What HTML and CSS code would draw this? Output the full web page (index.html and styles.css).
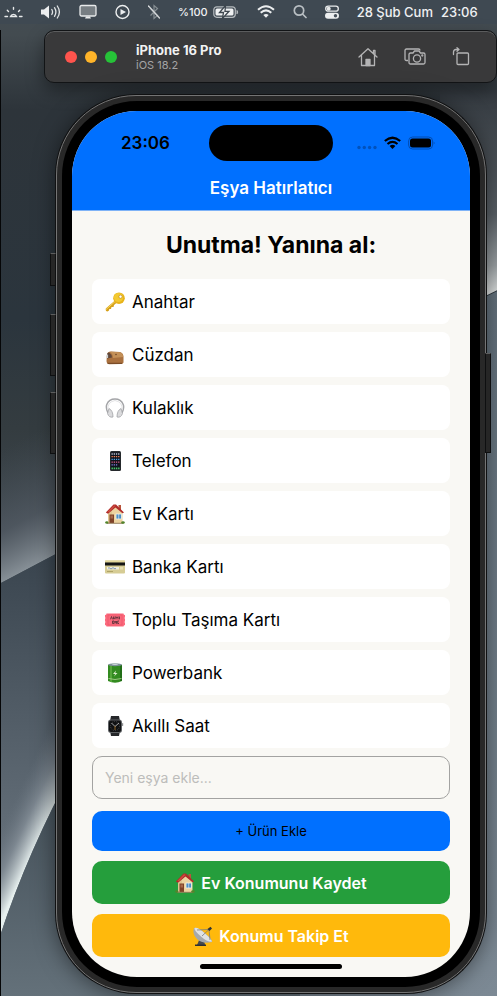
FILE: index.html
```html
<!DOCTYPE html>
<html lang="tr">
<head>
<meta charset="utf-8">
<meta name="viewport" content="width=device-width, initial-scale=1">
<title>Eşya Hatırlatıcı</title>
<link rel="stylesheet" href="styles.css">
</head>
<body>
<svg class="wallpaper" viewBox="0 0 497 996" preserveAspectRatio="none" aria-hidden="true">
  <defs>
    <linearGradient id="base" x1="0" y1="0" x2="0" y2="1">
      <stop offset="0" stop-color="#434c53"/><stop offset=".035" stop-color="#434b50"/><stop offset=".11" stop-color="#2d343a"/>
      <stop offset=".32" stop-color="#2b353d"/><stop offset=".43" stop-color="#343c40"/><stop offset=".6" stop-color="#46505a"/>
    </linearGradient>
    <linearGradient id="glowA" gradientUnits="userSpaceOnUse" x1="0" y1="450" x2="68" y2="578">
      <stop offset="0" stop-color="#454d54" stop-opacity="0"/><stop offset=".5" stop-color="#545c65" stop-opacity=".7"/><stop offset=".8" stop-color="#858e95"/><stop offset=".93" stop-color="#c0c8ca"/><stop offset="1" stop-color="#eef3f2"/>
    </linearGradient>
    <linearGradient id="mid" gradientUnits="userSpaceOnUse" x1="0" y1="560" x2="0" y2="860">
      <stop offset="0" stop-color="#3b4650"/><stop offset=".6" stop-color="#55606a"/><stop offset="1" stop-color="#66717b"/>
    </linearGradient>
    <linearGradient id="glowB" gradientUnits="userSpaceOnUse" x1="-8" y1="846" x2="28" y2="863">
      <stop offset="0" stop-color="#66717b" stop-opacity="0"/><stop offset=".5" stop-color="#87919a" stop-opacity=".7"/><stop offset="1" stop-color="#e6efee"/>
    </linearGradient>
    <linearGradient id="low" gradientUnits="userSpaceOnUse" x1="0" y1="800" x2="0" y2="996">
      <stop offset="0" stop-color="#46525b"/><stop offset="1" stop-color="#64717a"/>
    </linearGradient>
    <linearGradient id="rightA" gradientUnits="userSpaceOnUse" x1="0" y1="90" x2="0" y2="296">
      <stop offset="0" stop-color="#343a40"/><stop offset=".6" stop-color="#596066"/><stop offset=".85" stop-color="#9ba1a4"/><stop offset="1" stop-color="#e4e7e6"/>
    </linearGradient>
    <linearGradient id="rightB" gradientUnits="userSpaceOnUse" x1="0" y1="290" x2="0" y2="996">
      <stop offset="0" stop-color="#63717c"/><stop offset="1" stop-color="#7c8994"/>
    </linearGradient>
  </defs>
  <rect width="497" height="996" fill="url(#base)"/>
  <path d="M0 400H70V546L0 583Z" fill="url(#glowA)"/>
  <path d="M0 583L70 546V996H0Z" fill="url(#mid)"/>
  <path d="M0 650H75V764Q28 850 0 935Z" fill="url(#glowB)"/>
  <path d="M0 935Q28 850 75 764H300V996H0Z" fill="url(#low)"/>
  <path d="M440 90H497V290L440 318Z" fill="url(#rightA)"/>
  <path d="M300 386L497 291V996H300Z" fill="url(#rightB)"/>
  <path d="M0 30H1V996H0Z" fill="#050607"/>
</svg>

<header class="menubar">
  <svg width="19" height="22" viewBox="0 0 19 22" stroke="#e8eaeb" stroke-width="1.4" stroke-linecap="round" fill="none"><path d="M1 15.500H3.500M15.500 15.500H18M6.500 15.500A3.200 3.200 0 0 1 12.500 15.500ZM4.500 10.500L3.300 9.300M9.500 8.300V6.500M14.500 10.500L15.700 9.300"/></svg>
  <svg width="20" height="22" viewBox="0 0 20 22"><path d="M0 8.500H3L8 4.500V17.500L3 13.500H0Z" fill="#eceeef"/><path d="M10.800 8.500Q12.300 11 10.800 13.500M13.500 6.700Q16.300 11 13.500 15.300M16.300 5Q20.500 11 16.300 17" stroke="#e2e5e6" stroke-width="1.300" fill="none" stroke-linecap="round"/></svg>
  <svg width="18" height="22" viewBox="0 0 18 22"><rect x="1" y="4.500" width="16" height="10.500" rx="1.500" fill="#777e83" stroke="#e8eaeb" stroke-width="1.300"/><path d="M7 15.500H11L12 17.500H6Z" fill="#e8eaeb"/></svg>
  <svg width="15" height="22" viewBox="0 0 15 22"><circle cx="7.500" cy="11" r="6.500" stroke="#eceeef" stroke-width="1.400" fill="none"/><path d="M5.500 8L11 11L5.500 14Z" fill="#eceeef"/></svg>
  <svg width="12" height="22" viewBox="0 0 12 22" fill="none"><path d="M2.500 7.500L9.500 14.500L6 17.500V4.500L9.500 7.500L2.500 14.500" stroke="#858d92" stroke-width="1.200"/><path d="M.5 5L11.500 17" stroke="#d5d8da" stroke-width="1.300" stroke-linecap="round"/></svg>
  <div class="charge"><span>%100</span>
    <svg width="26" height="22" viewBox="0 0 26 22"><rect x=".8" y="5.800" width="21.500" height="10.500" rx="3" fill="none" stroke="#b5babd" stroke-width="1.200"/><rect x="2.500" y="7.500" width="18" height="7" rx="1.500" fill="#eff1f2"/><path d="M24 9.500Q25.500 11 24 12.800Z" fill="#b5babd" stroke="#b5babd"/><path d="M12.500 4.500L6.500 11.500H10.500L9.500 17.500L16 10.300H12Z" fill="#eff1f2" stroke="#3d464e" stroke-width="1.300"/></svg>
  </div>
  <svg width="18" height="22" viewBox="0 0 18 22" fill="none" stroke="#eceeef" stroke-width="2"><path d="M1 8.700Q9 1.700 17 8.700M3.700 11.700Q9 7 14.300 11.700"/><path d="M6.300 14Q9 11.800 11.700 14L9 16.700Z" fill="#eceeef" stroke="none"/></svg>
  <svg width="14" height="22" viewBox="0 0 14 22" fill="none" stroke="#b9bfc3" stroke-width="1.700" stroke-linecap="round"><circle cx="6" cy="9.500" r="4.700"/><path d="M9.500 13L13 16.500"/></svg>
  <svg width="14" height="22" viewBox="0 0 14 22"><rect x=".7" y="5.200" width="12.600" height="5" rx="2.500" fill="none" stroke="#e8eaeb" stroke-width="1.300"/><circle cx="3.700" cy="7.700" r="2" fill="#e8eaeb"/><rect x="0" y="11.800" width="14" height="6" rx="3" fill="#eceeef"/><circle cx="10.500" cy="14.800" r="1.700" fill="#46505a"/></svg>
  <span class="clock"><span>28 Şub Cum</span><span>23:06</span></span>
</header>

<section class="simbar">
  <span class="dots"><button class="dot red" aria-label="Kapat"></button><button class="dot amber" aria-label="Küçült"></button><button class="dot green" aria-label="Büyüt"></button></span>
  <div class="device"><strong>iPhone 16 Pro</strong><span>iOS 18.2</span></div>
  <div class="tools">
    <button aria-label="Ana ekran"><svg width="20" height="20" viewBox="0 0 20 20" fill="none" stroke="#b4b4b5" stroke-width="1.300" stroke-linejoin="round" stroke-linecap="round"><path d="M1 10L10 1.800L19 10M3.500 8V18.500H16.500V8M15.500 6.500V3.500H17V8"/><path d="M8 18.500V12.500H12V18.500Z" fill="#b4b4b5"/></svg></button>
    <button aria-label="Ekran görüntüsü"><svg width="22" height="20" viewBox="0 0 22 20" fill="none" stroke="#b4b4b5" stroke-width="1.300" stroke-linejoin="round"><path d="M4 13.500H2.500Q1 13.500 1 12V3.500Q1 2 2.500 2H14.500Q16 2 16 3.500"/><path d="M6.500 6H9L10.500 4H15L16.500 6H19.500Q21 6 21 7.500V15.500Q21 17 19.500 17H6.500Q5 17 5 15.500V7.500Q5 6 6.500 6Z"/><circle cx="13" cy="11.500" r="3.600"/><circle cx="18.300" cy="8.500" r=".5"/></svg></button>
    <button aria-label="Döndür"><svg width="18" height="20" viewBox="0 0 18 20" fill="none" stroke="#b4b4b5" stroke-width="1.300" stroke-linejoin="round" stroke-linecap="round"><rect x="5" y="6" width="11.500" height="11.500" rx="1"/><path d="M1.500 7.500V5Q1.500 2.500 4 2.500H6.500M5 .7L7 2.500L5 4.300"/></svg></button>
  </div>
</section>

<main class="phone">
  <i class="key action"></i><i class="key up"></i><i class="key down"></i><i class="key power"></i>
  <div class="bezel">
    <div class="screen">
      <div class="top">
        <div class="status">
          <span class="time">23:06</span>
          <span class="island"></span>
          <span class="signals">
            <svg width="78" height="14" viewBox="0 0 78 14"><g fill="#0052bd"><circle cx="2" cy="11.500" r="1.700"/><circle cx="7.300" cy="11.500" r="1.700"/><circle cx="12.600" cy="11.500" r="1.700"/><circle cx="18" cy="11.500" r="1.700"/></g><g fill="none" stroke="#000" stroke-width="2.200"><path d="M27.800 5Q35.500 -1.500 43.200 5M30.500 8Q35.500 3.800 40.500 8"/><path d="M32.600 10Q35.500 7.700 38.400 10L35.500 13Z" fill="#000" stroke="none"/></g><rect x="51.600" y="1" width="24" height="12" rx="4" fill="none" stroke="#004db2" stroke-width="1"/><rect x="53" y="2.500" width="21" height="9" rx="2.500"/><path d="M76.700 5.500Q78.500 7 76.700 8.500Z" fill="#004db2"/></svg>
          </span>
        </div>
        <h1>Eşya Hatırlatıcı</h1>
      </div>
      <div class="content">
        <h2>Unutma! Yanına al:</h2>
        <ul class="items">
          <li><svg class="emoji" viewBox="0 0 20 20"><path d="M10.500 8L.8 16.500Q.3 19.500 2.500 19.500L4 18.500L4.300 17L6 17L6.500 15L8.500 15L9 13L12 10.500Z" fill="#d6a018"/><path d="M1 17.500L11 8.700" stroke="#f7d65c" fill="none"/><circle cx="14" cy="6.200" r="5.800" fill="#e8b31a"/><circle cx="13.500" cy="5.500" r="4.600" fill="#f3c931"/><circle cx="15.500" cy="4.700" r="1.600" fill="#fff" stroke="#b17d10" stroke-width=".6"/></svg>Anahtar</li>
          <li><svg class="emoji" viewBox="0 0 20 20"><path d="M2 10Q2 6.500 6 6.500L15 7Q18.500 8 18.500 12V17.500Q18 19 16 19L4.500 19.300Q1.500 19 1.500 16Z" fill="#a9703e"/><path d="M6 6.700L15 7.200Q18 8.500 18.300 12L8 13Q8 9 5 7Z" fill="#c39058"/><path d="M1.800 11Q2 7.500 4 7.500Q6.500 9 7 12.500L2 13.500Z" fill="#5f473b"/><path d="M2.500 9.500V13" stroke="#ccd2d5" stroke-width="1.200"/><path d="M2.500 18.300H17" stroke="#6f4424" stroke-width="1"/><circle cx="11" cy="9.500" r=".8" fill="#6f4424"/></svg>Cüzdan</li>
          <li><svg class="emoji" viewBox="0 0 20 20" fill="none"><path d="M3 15Q.5 10 1.800 6.500Q4 1 10 1Q16 1 18.200 6.500Q19.500 10 17 15" stroke="#a4a5a8" stroke-width="1.500"/><path d="M3 12Q2 4 10 2.500Q18 4 17 12" stroke="#e3e3e5" stroke-width="1"/><path d="M4 10.500Q8 12.500 8 19Q4 20 2.500 15.500Z" fill="#dadadc" stroke="#a2a3a7" stroke-width=".8"/><path d="M16 10.500Q12 12.500 12 19Q16 20 17.500 15.500Z" fill="#dadadc" stroke="#a2a3a7" stroke-width=".8"/></svg>Kulaklık</li>
          <li><svg class="emoji" viewBox="0 0 20 20"><rect x="5" y="0" width="11" height="20" rx="1.500" fill="#25292c"/><rect x="6" y="1.500" width="9" height="17" fill="#10131c"/><g><path d="M6.500 3H14.500" stroke="#b9c2d4" stroke-width="1.300" stroke-dasharray="1.300 .9"/><path d="M6.500 5.700H14.500" stroke="#ef8257" stroke-width="1.300" stroke-dasharray="1.300 .9"/><path d="M6.500 8.400H14.500" stroke="#45a0e8" stroke-width="1.300" stroke-dasharray="1.300 .9"/><path d="M6.500 11.100H14.500" stroke="#d75c88" stroke-width="1.300" stroke-dasharray="1.300 .9"/><path d="M6.500 13.800H12.300" stroke="#7f7fdd" stroke-width="1.300" stroke-dasharray="1.300 .9"/><path d="M6.500 17.300H14.500" stroke="#48c968" stroke-width="1.700" stroke-dasharray="1.400 .8"/></g></svg>Telefon</li>
          <li><svg class="emoji" viewBox="0 0 20 20"><use href="#house"/></svg>Ev Kartı</li>
          <li><svg class="emoji" viewBox="0 0 20 20"><rect x="0" y="3.500" width="20" height="13" rx="1" fill="#d6cc94"/><rect x="0" y="3.500" width="20" height="1.500" fill="#e3d79b"/><rect y="5.500" width="20" height="3" fill="#151515"/><rect x="2" y="10" width="12" height="2.500" fill="#efecdf"/><path d="M3 11.300Q4 10 5 11.300T7 11.300T9 11.300T11 11.300" stroke="#5477a0" stroke-width=".7" fill="none"/><path d="M2 14.500H8" stroke="#9d9054" stroke-width=".7"/><rect x="15" y="10" width="3" height="2.500" fill="#e7dfb1"/></svg>Banka Kartı</li>
          <li><svg class="emoji" viewBox="0 0 20 20"><path d="M1.500 3.500H18.500Q18.500 5 20 5V7L19.500 8L20 9V11L19.500 12L20 13V15Q18.500 15 18.500 16.500H1.500Q1.500 15 0 15V13L.5 12L0 11V9L.5 8L0 7V5Q1.500 5 1.500 3.500Z" fill="#fb697c"/><rect x="3" y="5" width="14" height="10" fill="none" stroke="#ea5469" stroke-width=".7"/><path d="M5.500 9.300L6.500 6.500L7.500 9.300M8.500 6.500V9L10 8.500V6.500M11 9.300V6.700L12 8L13 6.700V9.300M14.500 6.500V9.300M7.500 11V13.500H9V11ZM10 13.500V11L11.500 13.500V11M14 11H12.700V13.500H14" stroke="#60343d" stroke-width=".9" fill="none"/></svg>Toplu Taşıma Kartı</li>
          <li><svg class="emoji" viewBox="0 0 20 20"><path d="M3 2Q10 -.5 17 2V18Q10 21.500 3 18Z" fill="#338b20"/><path d="M6 2.500V19" stroke="#55a63a" stroke-width="2"/><path d="M16 2V18" stroke="#1d6414" stroke-width="1.500"/><ellipse cx="10" cy="1.800" rx="7" ry="1.500" fill="#7e9299"/><ellipse cx="10" cy="1.200" rx="3" ry=".8" fill="#ced8db"/><path d="M11 7.500L8 11H10.300L9 13.500L12.500 10H10.300Z" fill="#dfeecf"/><path d="M3.500 15.500Q10 17.500 16.500 15.500" stroke="#b7d69b" stroke-width=".8" fill="none"/></svg>Powerbank</li>
          <li><svg class="emoji" viewBox="0 0 20 20"><path d="M6 0H14L15 5H5ZM5 15H15L14 20H6Z" fill="#25272a"/><rect x="3" y="3.500" width="14" height="13.500" rx="3" fill="#5e6164"/><rect x="4" y="4.500" width="12" height="11.500" rx="2" fill="#101113"/><rect x="17" y="7" width="1.200" height="3" rx=".5" fill="#8f9294"/><circle cx="10" cy="10" r="4.500" fill="none" stroke="#6d6f72" stroke-width=".7" stroke-dasharray=".7 1.300"/><path d="M6.500 7L10 10.500L14 7" stroke="#c9c9c9" stroke-width=".8" fill="none"/><path d="M10 10V14" stroke="#b07a2c" stroke-width=".8"/></svg>Akıllı Saat</li>
        </ul>
        <form class="form" onsubmit="return false">
          <input type="text" aria-label="Yeni eşya" placeholder="Yeni eşya ekle...">
          <button class="add">+ Ürün Ekle</button>
          <button class="big save"><svg class="emoji" viewBox="0 0 20 20"><g id="house"><rect x="13.500" y="1" width="2.500" height="6" fill="#b9543a"/><path d="M3 8L10 2.500L17.500 8V19H3Z" fill="#ecd3a0"/><path d="M3 8L7 5V19H3Z" fill="#e0c48f"/><path d="M.8 8.500L8.500 .5L11 .5L19 8.500L17.500 9.300L10.500 3.500L3 9.800Z" fill="#b02d2a"/><path d="M2.300 8L9 1.200L10.500 1.700L4 8.300Z" fill="#ce4d41"/><rect x="4.500" y="10.500" width="4.500" height="8.500" fill="#7f4328"/><rect x="5.500" y="11.500" width="2.500" height="3" fill="#a7684a"/><rect x="11" y="10" width="5.500" height="5" fill="#4a8fc7" stroke="#f8f3e5" stroke-width=".8"/><path d="M13.700 10V15" stroke="#eee" stroke-width=".6"/><path d="M2 19.300H18.500" stroke="#99815e"/><ellipse cx="1.800" cy="18.500" rx="1.600" ry="1.300" fill="#52852c"/><ellipse cx="18" cy="18.500" rx="1.800" ry="1.300" fill="#52852c"/></g></svg>Ev Konumunu Kaydet</button>
          <button class="big track"><svg class="emoji" viewBox="0 0 20 20"><path d="M7 12L4 19H12L11 14Z" fill="#46494c"/><path d="M2 18.500H13V20H2Z" fill="#2d3032"/><path d="M1 2Q-1 8 4 13Q10 18.500 19 16Q20 14 13 8Q5 .5 1 2Z" fill="#a5a9ac"/><path d="M1.500 2Q5 1 12 7.500Q19 13.500 18.800 15.800Q14 16 8 10.500Q1 4.500 1.500 2Z" fill="#e0e2e3"/><path d="M9 10L16 3.500M4 4L16 3.500L17 14" stroke="#777b7e" stroke-width=".8" fill="none"/><path d="M14.500 3L17.500 .8L19 2.500L16.500 5Z" fill="#303336"/></svg>Konumu Takip Et</button>
        </form>
        <div class="home"></div>
      </div>
    </div>
  </div>
</main>
</body>
</html>
```
FILE: styles.css
```css
* { box-sizing: border-box; }
body {
  margin: 0;
  min-height: 100vh;
  position: relative;
  overflow-x: hidden;
  font-family: Inter, "Liberation Sans", sans-serif;
  background: #2c343b;
}
svg { display: block; flex: none; }
button { font: inherit; border: 0; padding: 0; background: none; }
h1, h2, ul { margin: 0; padding: 0; }

.wallpaper { position: absolute; inset: 0; width: 100%; height: 100%; z-index: -1; }

.menubar {
  display: flex;
  align-items: center;
  gap: 18px;
  height: 24px;
  padding: 0 4px;
  background: #3f4952;
  color: #eff1f2;
  white-space: nowrap;
}
.charge { display: flex; align-items: center; gap: 5px; font-size: 11px; font-weight: 500; }
.clock { display: flex; gap: 8px; font-size: 13px; font-weight: 500; }

.simbar {
  display: flex;
  align-items: center;
  height: 53px;
  margin: 6px 0 0 44px;
  padding: 0 26px 0 20px;
  border: 1px solid #121416;
  border-radius: 10px;
  background: #39393a;
  box-shadow: inset 0 1px 0 #5b5c5d, 0 8px 18px rgba(0, 0, 0, .4);
}
.dots { display: flex; gap: 8px; }
.dot { width: 12px; height: 12px; border-radius: 50%; }
.red { background: #ff544d; }
.amber { background: #ffb429; }
.green { background: #26c238; }
.device { display: flex; flex-direction: column; margin-left: 19px; color: #a5a5a6; font-size: 11px; line-height: 14px; }
.device strong { color: #f2f2f2; font-size: 13px; line-height: 16px; }
.tools { display: flex; gap: 26px; margin-left: auto; }

.phone {
  position: relative;
  margin: 12px 11px 4px 56px;
  padding: 5px;
  border: 1px solid #747474;
  border-radius: 80px;
  background: #282828;
  box-shadow: 0 0 0 1px #101112, 0 2px 22px rgba(0, 0, 0, .5);
}
.bezel { padding: 10px; border-radius: 75px; background: #000; }
.screen { overflow: hidden; border-radius: 65px; background: #f9f8f4; }

.key { position: absolute; width: 6px; background: #262626; border: 1px solid #0e0f10; border-top-color: #5d5d5d; }
.action, .up, .down { left: -7px; }
.action { top: 157px; height: 33px; }
.up { top: 218px; height: 62px; }
.down { top: 296px; height: 62px; }
.power { right: -6px; top: 257px; height: 100px; }

.top { background: #0070ff; border-bottom: 1px solid #7fb3f7; }
.status { display: grid; grid-template-columns: 1fr 124px 1fr; align-items: center; padding-top: 14px; }
.time { padding-left: 10px; text-align: center; font-size: 17px; font-weight: 600; }
.island { height: 36px; border-radius: 18px; background: #000; }
.signals { justify-self: end; padding-right: 35px; }
h1 { padding: 17px 0 11px; color: #fff; text-align: center; font-size: 17px; line-height: 21px; font-weight: 600; }

.content { padding: 20px 20px 8px; }
h2 { text-align: center; font-size: 23px; line-height: 28px; font-weight: 700; }
.items { display: grid; gap: 8px; margin-top: 20px; list-style: none; }
.items li {
  display: flex;
  align-items: center;
  gap: 7px;
  height: 45px;
  padding-left: 13px;
  border-radius: 8px;
  background: #fff;
  font-size: 17px;
}
.emoji { width: 20px; height: 20px; }

.form { display: flex; flex-direction: column; gap: 10px; margin-top: 8px; }
.form input {
  width: 100%;
  height: 43px;
  margin-bottom: 2px;
  padding: 0 12px;
  border: 1px solid #a3a3a1;
  border-radius: 10px;
  background: transparent;
  font: inherit;
  font-size: 14px;
}
.form input::placeholder { color: #bdbdbb; opacity: 1; }
.add { height: 40px; border-radius: 10px; background: #0070ff; color: #000; font-size: 13px; }
.big {
  display: flex;
  align-items: center;
  justify-content: center;
  gap: 6px;
  height: 43px;
  border-radius: 10px;
  color: #fff;
  font-size: 16px;
  font-weight: 600;
}
.save { background: #259e3c; }
.track { background: #ffb90c; }
.home { width: 142px; height: 5px; margin: 7px auto 0; border-radius: 3px; background: #000; }
```
